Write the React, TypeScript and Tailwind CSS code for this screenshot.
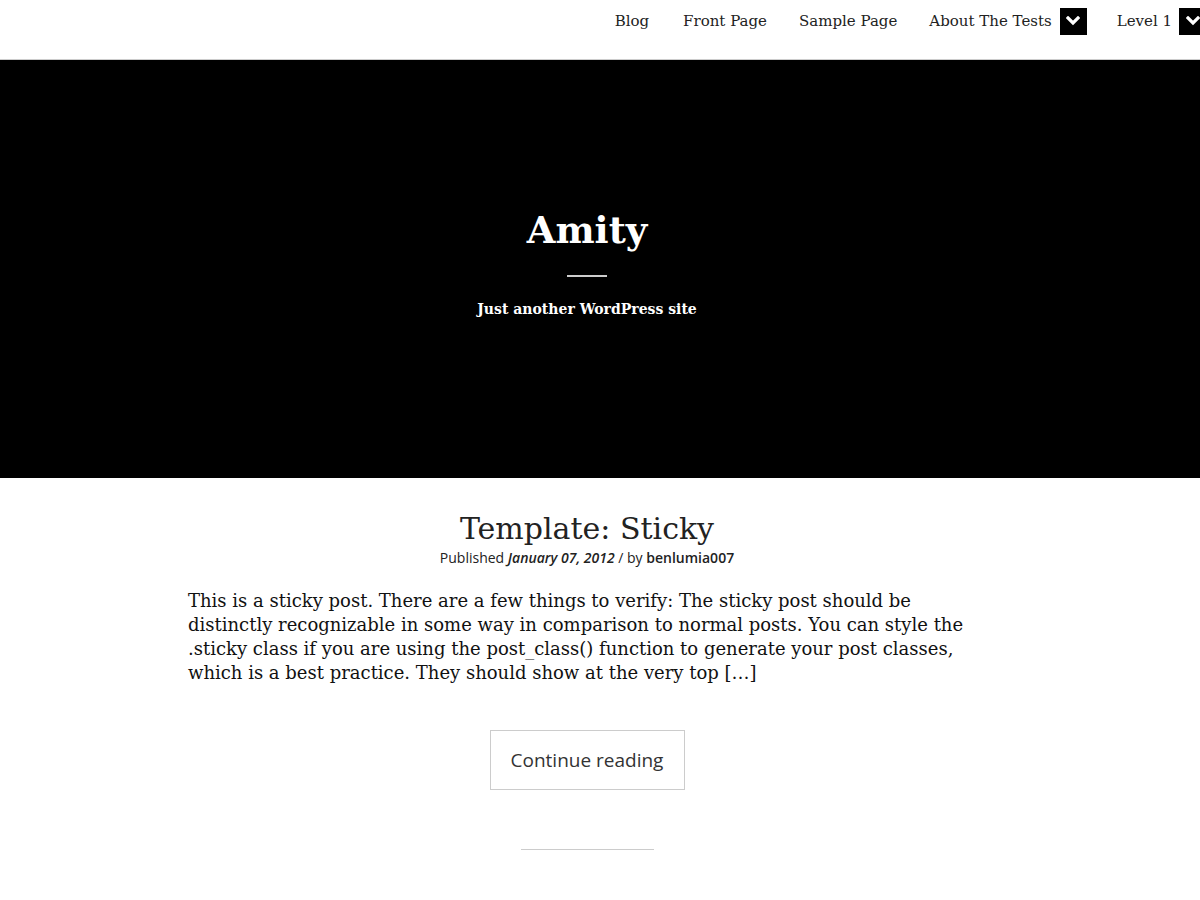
import React from "react";

const slab = { fontFamily: '"DejaVu Serif", "Liberation Serif", serif' };
const sans = { fontFamily: '"Open Sans", "Noto Sans", sans-serif' };

function Chevron() {
  return (
    <span className="inline-flex h-[27px] w-[27px] items-center justify-center bg-black">
      <svg width="14" height="10" viewBox="0 0 14 10">
        <polyline points="2,2 7,7 12,2" fill="none" stroke="white" strokeWidth="3.2" strokeLinecap="square" />
      </svg>
    </span>
  );
}

export default function App() {
  return (
    <div className="w-[1200px] overflow-hidden bg-white text-[#222]" style={slab}>
      <header className="h-[60px] border-b border-[#ccc] bg-white">
        <nav className="flex h-[42px] items-center justify-end text-[15px] text-[#222]">
          <span className="mr-[34px]">Blog</span>
          <span className="mr-[32px]">Front Page</span>
          <span className="mr-[32px]">Sample Page</span>
          <span className="mr-[8px]">About The Tests</span>
          <span className="mr-[30px]"><Chevron /></span>
          <span className="mr-[7px]">Level 1</span>
          <span className="mr-[-6px]"><Chevron /></span>
        </nav>
      </header>
      <section className="h-[418px] bg-black">
        <div className="flex w-[1174px] flex-col items-center pt-[145px] text-white">
          <h1 className="text-[37px] font-bold leading-[50px]">Amity</h1>
          <div className="mt-[20px] h-[2px] w-[40px] bg-[#ccc]" />
          <p className="mt-[22px] text-[14px] font-bold">Just another WordPress site</p>
        </div>
      </section>
      <main className="w-[1174px]">
        <article className="mx-auto flex w-[798px] flex-col items-center">
          <h2 className="mt-[30px] text-[30px] leading-[42px] text-[#222]">Template: Sticky</h2>
          <p className="text-[14px] leading-[16px] text-[#222]" style={sans}>
            Published <em className="font-semibold">January 07, 2012</em> / by <strong className="font-semibold">benlumia007</strong>
          </p>
          <p className="mt-[23px] w-full text-[18px] leading-[24px] text-[#111]">
            This is a sticky post. There are a few things to verify: The sticky post should be distinctly recognizable in some way in comparison to normal posts. You can style the .sticky class if you are using the post_class() function to generate your post classes, which is a best practice. They should show at the very top […]
          </p>
          <button className="mt-[45px] h-[60px] w-[195px] border border-[#ccc] text-[19px] text-[#333]" style={sans}>
            Continue reading
          </button>
          <div className="mt-[59px] h-px w-[133px] bg-[#ccc]" />
          <div className="h-[60px]" />
        </article>
      </main>
    </div>
  );
}
